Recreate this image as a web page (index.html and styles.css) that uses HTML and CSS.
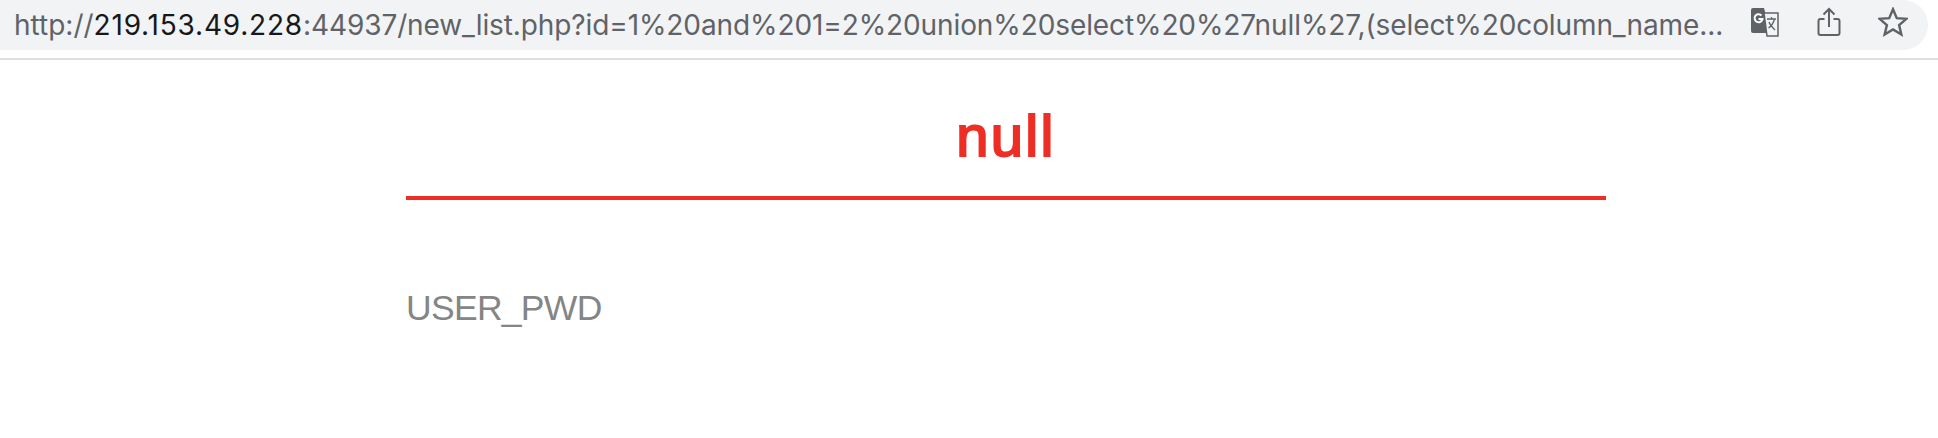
FILE: index.html
```html
<!DOCTYPE html>
<html lang="en">
<head>
  <meta charset="UTF-8">
  <meta name="viewport" content="width=device-width, initial-scale=1.0">
  <title>null</title>
  <link rel="stylesheet" href="styles.css">
</head>
<body>

<!-- Address bar -->
<header class="toolbar">
  <div class="omnibox">
    <div class="url"><span>http://</span><span class="host">219.153.49.228</span><span class="path">:44937/new_list.php?id=1%20and%201=2%20union%20select%20%27null%27,(select%20column_name...</span></div>
    <div class="icons">
      <svg class="icon" width="30" height="30" viewBox="0 0 30 30">
        <path d="M3 1h11l7 25H3a2 2 0 0 1-2-2V3a2 2 0 0 1 2-2z" fill="#5f6368"/>
        <path d="M14 6h14v23H17z" fill="#f1f3f4" stroke="#5f6368" stroke-width="1.5"/>
        <path d="M11.500 8.500a4 4 0 1 0 1 3.500H8.500" fill="none" stroke="#fff" stroke-width="2"/>
        <path d="M17 12h9M21.500 10v2M24.500 12c-1 4-3 7-6 9M19 15c1 3 3 5 6 8" fill="none" stroke="#5f6368" stroke-width="1.300"/>
      </svg>
      <svg class="icon" width="24" height="32" viewBox="0 0 24 32">
        <path d="M7.500 13H3.500a2 2 0 0 0-2 2v12a2 2 0 0 0 2 2h17a2 2 0 0 0 2-2V15a2 2 0 0 0-2-2h-4" fill="none" stroke="#5f6368" stroke-width="2"/>
        <path d="M12 21V3M6.500 8.500L12 3l5.500 5.500" fill="none" stroke="#5f6368" stroke-width="2"/>
      </svg>
      <svg class="icon" width="30" height="30" viewBox="1.500 1.500 27 27">
        <path d="M15 3.500l3.400 8 8.600.700-6.500 5.600 2 8.400L15 21.700l-7.500 4.500 2-8.400L3 12.200l8.600-.700z" fill="none" stroke="#5f6368" stroke-width="2.200" stroke-linejoin="miter"/>
      </svg>
    </div>
  </div>
</header>

<div class="container">
  <h1>null</h1>
  <p class="content">USER_PWD</p>
</div>

</body>
</html>
```

FILE: styles.css
```css
body {
  font-family: "Liberation Sans", Arial, sans-serif;
  background-color: #fff;
  margin: 0;
  padding: 0;
}
.toolbar {
  height: 58px;
  padding-right: 10px;
  border-bottom: 2px solid #dddddd;
}
.omnibox {
  height: 50px;
  display: flex;
  align-items: center;
  justify-content: space-between;
  padding-left: 14px;
  background-color: #f1f3f4;
  border-radius: 0 25px 25px 0;
}
.url {
  font-family: Inter, "Liberation Sans", sans-serif;
  font-size: 28px;
  color: #5f6368;
  white-space: nowrap;
}
.url .host {
  color: #17181a;
  letter-spacing: 0.8px;
}
.url .path {
  letter-spacing: -0.1px;
}
.icons {
  display: flex;
  align-items: center;
  gap: 37px;
  padding-right: 20px;
  padding-bottom: 6px;
}
.icon {
  display: block;
}
.container {
  width: 1200px;
  margin-left: 406px;
}
h1 {
  margin: 0;
  padding: 42px 0 26px;
  font-size: 58px;
  font-weight: 400;
  letter-spacing: 2.3px;
  -webkit-text-stroke: 2px #ee2e24;
  line-height: 68px;
  color: #ee2e24;
  text-align: center;
  border-bottom: 4px solid #ee2e24;
}
.content {
  margin: 0;
  padding-top: 86px;
  font-size: 35.500px;
  letter-spacing: -0.7px;
  line-height: 44px;
  color: #858585;
}
```
